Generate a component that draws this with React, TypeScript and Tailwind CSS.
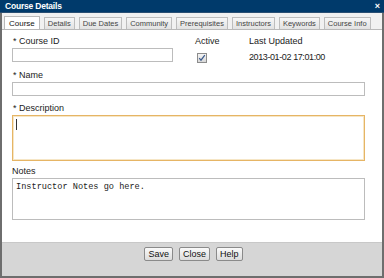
import React from 'react';

const tabs = ['Course', 'Details', 'Due Dates', 'Community', 'Prerequisites', 'Instructors', 'Keywords', 'Course Info'];

const sans = { fontFamily: '"Liberation Sans", Arial, sans-serif' };

const App: React.FC = () => {
  return (
    <div
      className="w-[384px] h-[278px] flex flex-col bg-[#6e6e6e] px-[2px] pb-[2px] text-[#222]"
      style={sans}
    >
      {/* title bar */}
      <div className="h-[13px] -mx-[2px] bg-[#003a6b] flex items-center justify-between pl-[5px] pr-[4px] border-b border-[#2a4f73]">
        <span className="text-white font-bold text-[8.5px] leading-none tracking-[-0.2px]">Course Details</span>
        <span className="text-white font-bold text-[9px] leading-none">×</span>
      </div>

      {/* tabs */}
      <div className="bg-[#f1f1f1] h-[17px] flex items-end gap-[4px] pl-[2px] border-b border-[#b9b9b9] overflow-hidden">
        {tabs.map((t, i) =>
          i === 0 ? (
            <div
              key={t}
              className="shrink-0 whitespace-nowrap h-[14px] -mb-px bg-white border border-b-0 border-[#b9b9b9] px-[4px] flex items-center text-[8px] text-[#111]"
            >
              {t}
            </div>
          ) : (
            <div
              key={t}
              className="shrink-0 whitespace-nowrap h-[12px] bg-gradient-to-b from-[#f7f7f7] to-[#e2e2e2] border border-b-0 border-[#bdbdbd] px-[3px] flex items-center text-[7.5px] text-[#444]"
            >
              {t}
            </div>
          )
        )}
      </div>

      {/* content */}
      <div className="bg-white flex-1 flex flex-col pl-[10px] pr-[17px] pt-[5px] text-[9px] border-b border-[#c8c8c8]">
        <div className="flex">
          <div className="w-[183px] flex flex-col">
            <div className="h-[12px] leading-[12px] pl-[1px]">* Course ID</div>
            <div className="mt-[1px] w-[161px] h-[14px] border border-[#bcbcbc] bg-white" />
          </div>
          <div className="w-[54px] flex flex-col">
            <div className="h-[12px] leading-[12px]">Active</div>
            <div className="mt-[6px] ml-[2px] w-[10px] h-[10px] border border-[#8c8c8c] bg-gradient-to-b from-[#f4f4f4] to-[#d8d8d8] flex items-center justify-center">
              <svg width="8" height="8" viewBox="0 0 8 8">
                <path d="M1.2 4.2 L3 6.2 L6.8 1.2" fill="none" stroke="#3a5a8c" strokeWidth="1.2" />
              </svg>
            </div>
          </div>
          <div className="flex flex-col">
            <div className="h-[12px] leading-[12px]">Last Updated</div>
            <div className="mt-[4px] h-[12px] leading-[12px] tracking-[-0.4px]">2013-01-02 17:01:00</div>
          </div>
        </div>

        <div className="mt-[6px] h-[12px] leading-[12px] pl-[1px]">* Name</div>
        <div className="mt-[1px] h-[14px] border border-[#bcbcbc] bg-white" />

        <div className="mt-[6px] h-[12px] leading-[12px] pl-[1px]">* Description</div>
        <div className="mt-[1px] h-[46px] border border-[#e6b565] shadow-[inset_0_0_0_1px_#f6e6c6] bg-white pl-[3px] pt-[3px]">
          <div className="w-px h-[11px] bg-[#333]" />
        </div>

        <div className="mt-[4px] h-[12px] leading-[12px]">Notes</div>
        <div className="mt-[1px] h-[42px] border border-[#bcbcbc] bg-white pl-[3px] pt-[3px]">
          <div
            className="text-[8.6px] leading-[11px] text-[#222]"
            style={{ fontFamily: '"Liberation Mono", "Courier New", monospace' }}
          >
            Instructor Notes go here.
          </div>
        </div>
      </div>

      {/* footer */}
      <div className="h-[33px] bg-[#d6d6d6] flex items-start justify-center gap-[6px] pt-[4px] pl-[3px]">
        {['Save', 'Close', 'Help'].map((b) => (
          <button
            key={b}
            className="h-[14px] px-[3px] border border-[#8a8a8a] rounded-[2px] bg-gradient-to-b from-[#fafafa] to-[#dcdcdc] text-[9px] leading-none text-[#111]"
            style={sans}
          >
            {b}
          </button>
        ))}
      </div>
    </div>
  );
};

export default App;
